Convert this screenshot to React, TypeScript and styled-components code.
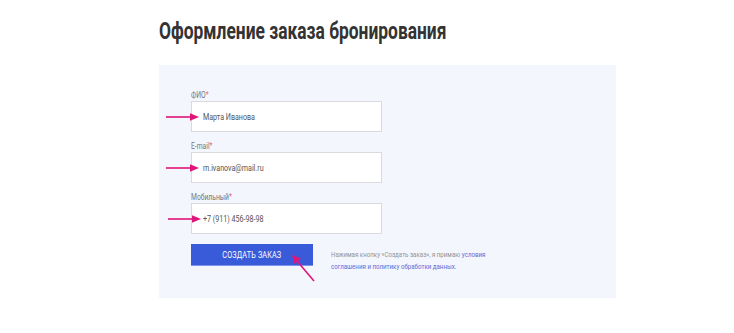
import React from "react";
import styled, { createGlobalStyle } from "styled-components";

const Global = createGlobalStyle`
  html, body { margin: 0; padding: 0; background: #fff; }
  body { font-family: "Roboto", "Liberation Sans", sans-serif; }
`;

const Page = styled.div`
  padding: 16px 0 0 159px;
`;

const Title = styled.h1`
  margin: 0;
  display: inline-block;
  transform: scaleX(0.725);
  transform-origin: left center;
  white-space: nowrap;
  font-family: "Roboto", sans-serif;
  font-weight: 700;
  font-size: 24px;
  line-height: 30px;
  color: #333;
`;

const Panel = styled.div`
  margin-top: 19px;
  width: 457px;
  height: 233px;
  box-sizing: border-box;
  background: #f3f6fd;
  padding: 25px 0 0 32px;
`;

const Field = styled.div`
  margin-bottom: 9px;
`;

const Narrow = styled.span<{ $k?: number }>`
  display: inline-block;
  white-space: nowrap;
  transform: scaleX(${(p) => p.$k ?? 0.75});
  transform-origin: left center;
`;

const Label = styled.div`
  font-size: 9px;
  line-height: 11px;
  color: #777;
  span.req { color: #e06a8e; }
`;

const InputWrap = styled.div`
  position: relative;
  width: 191px;
`;

const InputBox = styled.div`
  box-sizing: border-box;
  height: 31px;
  width: 191px;
  background: #fff;
  border: 1px solid #d9d9de;
  padding-left: 11px;
  display: flex;
  align-items: center;
  font-size: 9.5px;
  color: #555;
`;

const Arrow = styled.svg<{ $left: number }>`
  position: absolute;
  left: ${(p) => p.$left}px;
  top: 11px;
`;

const Bottom = styled.div`
  display: flex;
  align-items: flex-start;
  margin-top: 10px;
  gap: 18px;
`;

const ButtonWrap = styled.div`
  position: relative;
`;

const Button = styled.button`
  width: 122px;
  height: 22px;
  border: none;
  border-bottom: 1px solid #7b95ee;
  background: #3a5bd9;
  color: #fff;
  font-family: inherit;
  font-size: 9.5px;
  letter-spacing: 0.2px;
  padding: 0;
  cursor: pointer;
  display: flex;
  align-items: center;
  justify-content: center;
  span {
    display: inline-block;
    white-space: nowrap;
    transform: scaleX(0.76);
  }
`;

const Note = styled.div`
  padding-top: 5px;
  font-size: 8px;
  line-height: 12px;
  color: #939393;
  a { color: #6369d4; text-decoration: none; }
`;

const NoteLine = styled.div`
  white-space: nowrap;
  transform: scaleX(0.77);
  transform-origin: left center;
`;

const ButtonArrow = styled.svg`
  position: absolute;
  left: 99px;
  top: 9px;
`;

const RightArrow = ({ left }: { left: number }) => (
  <Arrow $left={left} width="34" height="10" viewBox="0 0 34 10">
    <line x1="0" y1="5" x2="26" y2="5" stroke="#e0157a" strokeWidth="1.6" />
    <polygon points="33,5 24,1.2 24,8.8" fill="#e0157a" />
  </Arrow>
);

export default function App() {
  const fields = [
    { label: "ФИО", value: "Марта Иванова", arrow: -25 },
    { label: "E-mail", value: "m.ivanova@mail.ru", arrow: -25 },
    { label: "Мобильный", value: "+7 (911) 456-98-98", arrow: -23 },
  ];
  return (
    <>
      <Global />
      <Page>
        <Title>Оформление заказа бронирования</Title>
        <Panel>
          {fields.map((f) => (
            <Field key={f.label}>
              <Label>
                <Narrow>
                  {f.label}
                  <span className="req">*</span>
                </Narrow>
              </Label>
              <InputWrap>
                <InputBox>
                  <Narrow>{f.value}</Narrow>
                </InputBox>
                <RightArrow left={f.arrow} />
              </InputWrap>
            </Field>
          ))}
          <Bottom>
            <ButtonWrap>
              <Button>
                <span>СОЗДАТЬ ЗАКАЗ</span>
              </Button>
              <ButtonArrow width="28" height="30" viewBox="0 0 28 30">
                <line x1="24" y1="28" x2="7" y2="8" stroke="#e0157a" strokeWidth="1.6" />
                <polygon points="2,2 4.5,11 11,5.5" fill="#e0157a" />
              </ButtonArrow>
            </ButtonWrap>
            <Note>
              <NoteLine>
                Нажимая кнопку «Создать заказ», я примаю <a href="#">условия</a>
              </NoteLine>
              <NoteLine>
                <a href="#">соглашения и политику обработки данных.</a>
              </NoteLine>
            </Note>
          </Bottom>
        </Panel>
      </Page>
    </>
  );
}
